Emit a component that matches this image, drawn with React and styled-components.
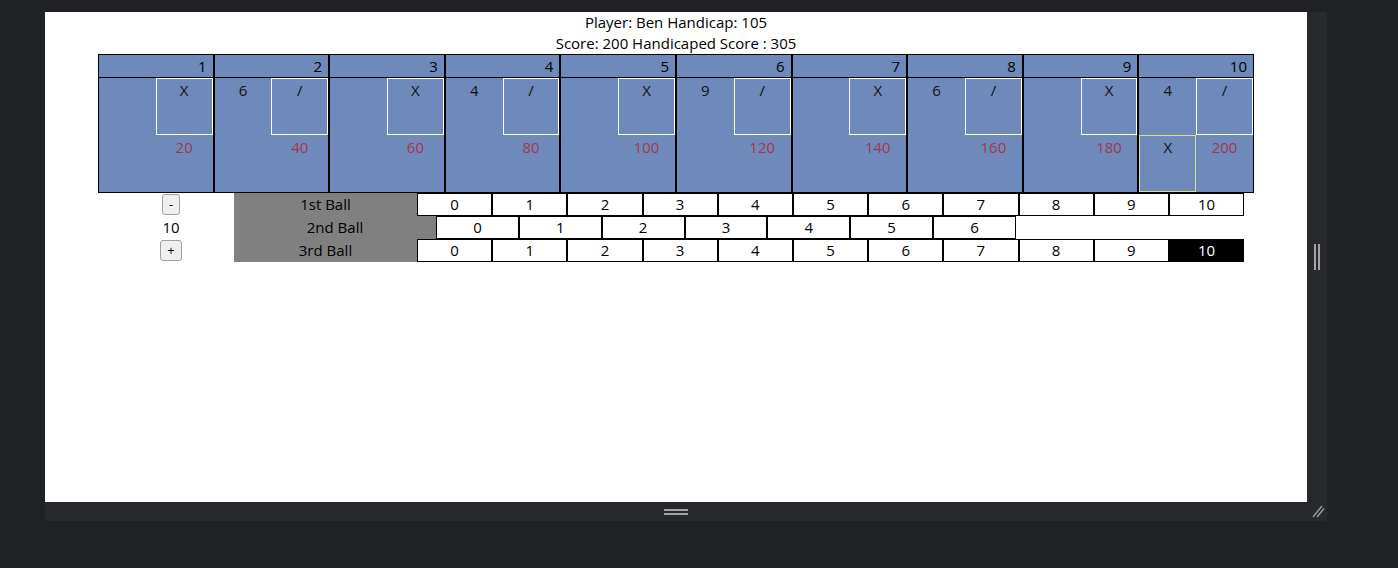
import React from 'react'
import styled, { createGlobalStyle } from 'styled-components'

const GlobalStyle = createGlobalStyle`
  body {
    margin: 0;
    background: #202124;
    font-family: "Open Sans", "Noto Sans", sans-serif;
    font-size: 15px;
    color: #000;
  }
`

const Shell = styled.div`
  padding: 12px 0 0 45px;
  min-height: 556px;
`

const Window = styled.div`
  display: grid;
  grid-template-columns: 1262px 20px;
  grid-template-rows: 490px 19px;
`

const Viewport = styled.div`
  background: #fff;
  overflow: hidden;
`

const SideBar = styled.div`
  background: #28292d;
  display: flex;
  justify-content: center;
  align-items: center;
  gap: 2px;
`

const BottomBar = styled.div`
  background: #28292d;
  display: flex;
  flex-direction: column;
  justify-content: center;
  align-items: center;
  gap: 2px;
`

const Corner = styled.div`
  background: #28292d;
  display: flex;
  align-items: flex-end;
  justify-content: flex-end;
  padding: 0 2px 3px 0;
`

const Bar = styled.div`
  background: #a3a3a3;
  width: ${p => p.$w}px;
  height: ${p => p.$h}px;
`

const Header = styled.div`
  text-align: center;
  line-height: 21px;
`

const FrameTable = styled.div`
  width: 1156px;
  margin: 0 auto;
  display: grid;
  grid-template-columns: repeat(10, 1fr);
`

const Frame = styled.div`
  border: 1px solid #000;
  background: #6e8aba;
`

const FrameNo = styled.div`
  height: 22px;
  line-height: 22px;
  text-align: right;
  padding-right: 6px;
  border-bottom: 1px solid #000;
`

const FrameBody = styled.div`
  display: grid;
  grid-template-columns: 1fr 1fr;
  grid-template-rows: 57px 57px;
`

const Cell = styled.div`
  box-sizing: border-box;
  border: 1px solid ${p => p.$edge || 'transparent'};
  text-align: center;
  line-height: 21px;
  padding-top: 1px;
  color: ${p => (p.$score ? '#a6374f' : '#111')};
`

const Controls = styled.div`
  width: 1156px;
  margin: 0 auto;
  display: flex;
`

const Stepper = styled.div`
  width: 126px;
  padding-left: 10px;
  display: flex;
  flex-direction: column;
`

const StepRow = styled.div`
  height: 23px;
  display: flex;
  align-items: center;
  justify-content: center;
  line-height: 21px;
`

const StepButton = styled.button`
  font-family: "Open Sans", sans-serif;
  font-size: 13px;
  line-height: 17px;
  height: 21px;
  padding: 0 6px;
  background: #efefef;
  border: 1px solid #a0a0a0;
  border-radius: 3px;
  color: #000;
`

const BallRows = styled.div`
  display: flex;
  flex-direction: column;
`

const BallRow = styled.div`
  display: flex;
  height: 23px;
`

const Label = styled.div`
  width: ${p => p.$w}px;
  background: #808080;
  text-align: center;
  line-height: 22px;
`

const Pin = styled.div`
  box-sizing: border-box;
  width: ${p => p.$w}px;
  border: 1px solid #000;
  background: ${p => (p.$on ? '#000' : '#fff')};
  color: ${p => (p.$on ? '#fff' : '#000')};
  text-align: center;
  line-height: 21px;
`

const frames = [
  ['', 'X', 20],
  ['6', '/', 40],
  ['', 'X', 60],
  ['4', '/', 80],
  ['', 'X', 100],
  ['9', '/', 120],
  ['', 'X', 140],
  ['6', '/', 160],
  ['', 'X', 180],
]

const range = n => Array.from({ length: n }, (_, i) => i)

const balls = [
  { label: '1st Ball', w: 183, cell: 75.2, count: 11 },
  { label: '2nd Ball', w: 202, cell: 82.85, count: 7 },
  { label: '3rd Ball', w: 183, cell: 75.2, count: 11, picked: 10 },
]

const Grip = () => (
  <svg width="14" height="14" viewBox="0 0 14 14">
    <line x1="2" y1="13" x2="11" y2="2" stroke="#9c9c9c" strokeWidth="1.4" />
    <line x1="6" y1="13" x2="13" y2="4.5" stroke="#9c9c9c" strokeWidth="1.4" />
  </svg>
)

export default function App() {
  return (
    <Shell>
      <GlobalStyle />
      <Window>
        <Viewport>
          <Header>
            <div>Player: Ben Handicap: 105</div>
            <div>Score: 200 Handicaped Score : 305</div>
          </Header>
          <FrameTable>
            {frames.map(([a, b, s], i) => (
              <Frame key={i}>
                <FrameNo>{i + 1}</FrameNo>
                <FrameBody>
                  <Cell>{a}</Cell>
                  <Cell $edge="#fff">{b}</Cell>
                  <Cell />
                  <Cell $score>{s}</Cell>
                </FrameBody>
              </Frame>
            ))}
            <Frame>
              <FrameNo>10</FrameNo>
              <FrameBody>
                <Cell>4</Cell>
                <Cell $edge="#fff">/</Cell>
                <Cell $edge="#d4e38a">X</Cell>
                <Cell $score>200</Cell>
              </FrameBody>
            </Frame>
          </FrameTable>
          <Controls>
            <Stepper>
              <StepRow><StepButton>-</StepButton></StepRow>
              <StepRow>10</StepRow>
              <StepRow><StepButton>+</StepButton></StepRow>
            </Stepper>
            <BallRows>
              {balls.map(b => (
                <BallRow key={b.label}>
                  <Label $w={b.w}>{b.label}</Label>
                  {range(b.count).map(n => (
                    <Pin key={n} $w={b.cell} $on={b.picked === n}>{n}</Pin>
                  ))}
                </BallRow>
              ))}
            </BallRows>
          </Controls>
        </Viewport>
        <SideBar>
          <Bar $w={2} $h={26} />
          <Bar $w={2} $h={26} />
        </SideBar>
        <BottomBar>
          <Bar $w={24} $h={2} />
          <Bar $w={24} $h={2} />
        </BottomBar>
        <Corner>
          <Grip />
        </Corner>
      </Window>
    </Shell>
  )
}
